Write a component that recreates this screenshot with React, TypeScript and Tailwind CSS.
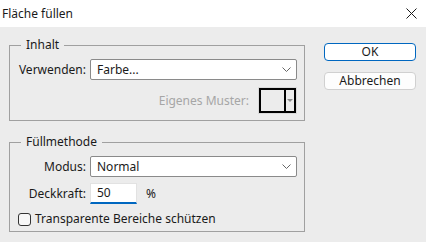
function Chevron() {
  return (
    <svg width="9" height="5" viewBox="0 0 9 5" className="text-[#666]">
      <path d="M0.5 0.5 L4.5 4.5 L8.5 0.5" fill="none" stroke="currentColor" strokeWidth="1" />
    </svg>
  );
}

function Select({ value }: { value: string }) {
  return (
    <div className="flex-1 h-[21px] flex items-center justify-between bg-white border border-[#8a8a8a] rounded-[2px] pl-[6px] pr-[5px]">
      <span>{value}</span>
      <Chevron />
    </div>
  );
}

export default function App() {
  return (
    <div className="w-[426px] h-[242px] bg-[#ececec] text-[12px] leading-[16px] text-[#1a1a1a] font-['Noto_Sans',sans-serif] overflow-hidden">
      <div className="h-[27px] bg-white flex items-center justify-between pl-[2px] pr-[9px]">
        <span>Fläche füllen</span>
        <svg width="11" height="11" viewBox="0 0 11 11">
          <path d="M0.5 0.5 L10.5 10.5 M10.5 0.5 L0.5 10.5" stroke="#1a1a1a" strokeWidth="1" />
        </svg>
      </div>

      <div className="flex">
        <div className="w-[305px] pl-[9px]">
          <fieldset className="mt-[10px] border border-[#a0a0a0] pl-[8px] pr-[7px] pt-[6px] pb-[6px]">
            <legend className="ml-[3px] px-[5px] leading-[16px]">Inhalt</legend>
            <div className="flex items-center gap-[4px]">
              <span className="w-[68px] text-right">Verwenden:</span>
              <Select value="Farbe..." />
            </div>
            <div className="mt-[7px] flex items-center justify-end">
              <span className="text-[#a6a6a6] mr-[9px]">Eigenes Muster:</span>
              <div className="w-[39px] h-[27px] border border-[#dadada] flex">
                <div className="flex-1 border-2 border-r-0 border-black bg-[#ececec]" />
                <div className="w-[12px] border-2 border-black flex items-center justify-center bg-[#ececec]">
                  <svg width="6" height="3" viewBox="0 0 6 3">
                    <path d="M0 0 L6 0 L3 3 Z" fill="#8c8c8c" />
                  </svg>
                </div>
              </div>
            </div>
          </fieldset>

          <fieldset className="mt-[13px] border border-[#a0a0a0] pl-[8px] pr-[7px] pt-[6px] pb-[4px]">
            <legend className="ml-[3px] px-[5px] leading-[16px]">Füllmethode</legend>
            <div className="flex items-center gap-[4px]">
              <span className="w-[68px] text-right">Modus:</span>
              <Select value="Normal" />
            </div>
            <div className="mt-[6px] flex items-center gap-[4px]">
              <span className="w-[68px] text-right">Deckkraft:</span>
              <div className="w-[47px] h-[21px] bg-white border border-[#e2e2e2] border-b-2 border-b-[#0067c0] flex items-center pl-[6px]">
                50
              </div>
              <span className="ml-[5px]">%</span>
            </div>
            <div className="mt-[7px] flex items-center h-[16px]">
              <span className="w-[13px] h-[13px] rounded-[3px] border border-[#333] bg-[#f7f7f7]" />
              <span className="ml-[4px]">Transparente Bereiche schützen</span>
            </div>
          </fieldset>
        </div>

        <div className="ml-[19px] pt-[16px] flex flex-col gap-[11px]">
          <button className="w-[92px] h-[18px] flex items-center justify-center bg-white border border-[#0067c0] rounded-[4px] leading-[16px]">
            OK
          </button>
          <button className="w-[92px] h-[18px] flex items-center justify-center bg-[#fdfdfd] border border-[#d0d0d0] rounded-[4px] leading-[16px]">
            Abbrechen
          </button>
        </div>
      </div>
    </div>
  );
}
